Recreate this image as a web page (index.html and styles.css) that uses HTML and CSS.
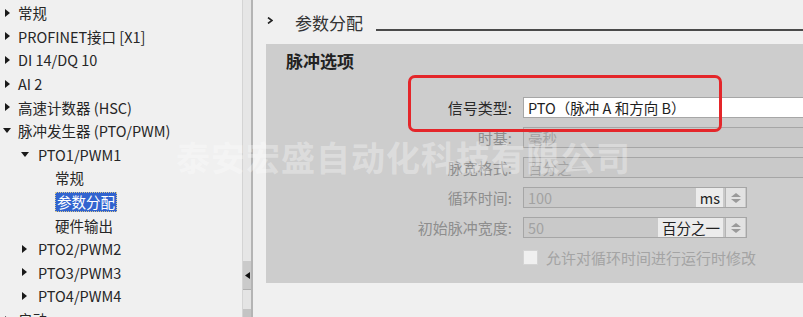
FILE: index.html
```html
<html>
<head>
    <title>
        属性 - 参数分配
    </title>
    <link rel="stylesheet" href="styles.css">
</head>

<body>
<div class="window">
    <ul class="tree">
        <li class="node lvl0"><i class="twisty closed"></i>常规</li>
        <li class="node lvl0"><i class="twisty closed"></i>PROFINET接口 [X1]</li>
        <li class="node lvl0"><i class="twisty closed"></i>DI 14/DQ 10</li>
        <li class="node lvl0"><i class="twisty closed"></i>AI 2</li>
        <li class="node lvl0"><i class="twisty closed"></i>高速计数器 (HSC)</li>
        <li class="node lvl0"><i class="twisty open"></i>脉冲发生器 (PTO/PWM)</li>
        <li class="node lvl1"><i class="twisty open"></i>PTO1/PWM1</li>
        <li class="node lvl2">常规</li>
        <li class="node lvl2"><span class="selected">参数分配</span></li>
        <li class="node lvl2">硬件输出</li>
        <li class="node lvl1"><i class="twisty closed"></i>PTO2/PWM2</li>
        <li class="node lvl1"><i class="twisty closed"></i>PTO3/PWM3</li>
        <li class="node lvl1"><i class="twisty closed"></i>PTO4/PWM4</li>
        <li class="node lvl0"><i class="twisty closed"></i>启动</li>
    </ul>

    <div class="splitter">
        <div class="split-track"></div>
        <div class="split-btn">
            <svg width="5" height="7" viewBox="0 0 5 7"><path d="M5 0 L0 3.5 L5 7 Z" fill="#111"/></svg>
        </div>
        <div class="split-gap"></div>
        <div class="split-end"></div>
    </div>

    <div class="content">
        <div class="section-head">
            <svg class="chevron" width="6" height="7" viewBox="0 0 6 7"><path d="M1 0.5 L5 3.5 L1 6.5" fill="none" stroke="#222" stroke-width="1.6"/></svg>
            <span class="section-title">参数分配</span>
            <div class="rule"></div>
        </div>

        <div class="group">
            <h3>脉冲选项</h3>
            <div class="form">
                <label class="label active">信号类型:</label>
                <div class="field white">PTO（脉冲 A 和方向 B）</div>

                <label class="label">时基:</label>
                <div class="field">毫秒</div>

                <label class="label">脉宽格式:</label>
                <div class="field">百分之一</div>

                <label class="label">循环时间:</label>
                <div class="field short">
                    <span class="value">100</span>
                    <span class="unit">ms</span>
                    <span class="spin"><i class="up"></i><i class="down"></i></span>
                </div>

                <label class="label">初始脉冲宽度:</label>
                <div class="field short">
                    <span class="value">50</span>
                    <span class="unit">百分之一</span>
                    <span class="spin"><i class="up"></i><i class="down"></i></span>
                </div>

                <span></span>
                <div class="check-row">
                    <span class="checkbox"></span>
                    <span>允许对循环时间进行运行时修改</span>
                </div>
            </div>
        </div>
    </div>

    <!-- watermark and annotation lie over the page -->
    <div class="watermark">泰安宏盛自动化科技有限公司</div>
    <div class="highlight"></div>
</div>
</body>
</html>
```

FILE: styles.css
```css
body {
    margin: 0;
    overflow: hidden;
    font-family: "Noto Sans CJK SC", sans-serif;
    background-color: #f0f0f0;
}

.window {
    position: relative;
    display: flex;
    width: 803px;
    height: 317px;
    overflow: hidden;
}

/* left navigation tree */
.tree {
    list-style: none;
    margin: 0;
    padding: 1px 0 0 0;
    width: 242px;
    flex-shrink: 0;
    background-color: #f0f0f0;
    font-size: 14.5px;
    color: #262626;
}

.node {
    display: flex;
    align-items: center;
    height: 23.6px;
    white-space: nowrap;
}

.lvl0 {
    padding-left: 5px;
}

.lvl1 {
    padding-left: 22px;
}

.lvl2 {
    padding-left: 55px;
}

.twisty {
    width: 0;
    height: 0;
}

.twisty.closed {
    border-left: 5px solid #1a1a1a;
    border-top: 4px solid transparent;
    border-bottom: 4px solid transparent;
    margin-right: 8px;
}

.twisty.open {
    border-top: 5px solid #1a1a1a;
    border-left: 4px solid transparent;
    border-right: 4px solid transparent;
    margin-left: -2px;
    margin-right: 7px;
}

.lvl1 .twisty.closed {
    margin-right: 11px;
}

.lvl1 .twisty.open {
    margin-left: -1px;
    margin-right: 9px;
}

.selected {
    padding: 0 2px;
    line-height: 20px;
    background-color: #3163cf;
    color: white;
    outline: 1px dotted #d8c890;
    outline-offset: -1px;
}

/* splitter between panes */
.splitter {
    display: flex;
    flex-direction: column;
    width: 8px;
    flex-shrink: 0;
    border-left: 1px solid #d4d4d4;
    border-right: 2px solid #b4b4b4;
    background-color: #e6e6e6;
}

.split-track {
    flex: 1;
}

.split-btn {
    display: flex;
    align-items: center;
    justify-content: center;
    height: 28px;
    background-color: #cacaca;
    border-bottom: 1px solid #b0b0b0;
}

.split-gap {
    height: 19px;
    background-color: #e4e4e4;
}

.split-end {
    height: 8px;
    background-color: #c4c4c4;
}

/* right content pane */
.content {
    flex: 1;
    min-width: 0;
    background-color: #f0f0f0;
}

.section-head {
    display: flex;
    align-items: center;
    height: 44px;
    padding-left: 14px;
}

.chevron {
    margin-top: -3px;
}

.section-title {
    margin-left: 22px;
    font-size: 17px;
    color: #333;
}

.rule {
    flex: 1;
    height: 2px;
    margin-left: 13px;
    margin-top: 16px;
    background-color: #4a4a4a;
}

.group {
    height: 239px;
    margin-left: 13px;
    background-color: #cdcdcd;
}

.group h3 {
    margin: 0;
    padding: 6px 0 0 20px;
    line-height: 22px;
    font-size: 17px;
    font-weight: bold;
    color: #222;
}

.form {
    display: grid;
    grid-template-columns: 246px 1fr;
    column-gap: 11px;
    row-gap: 9px;
    grid-auto-rows: 21px;
    margin-top: 25px;
}

.label {
    text-align: right;
    font-size: 15px;
    line-height: 21px;
    color: #8e8e8e;
}

.label.active {
    color: #2a2a2a;
}

.field {
    display: flex;
    align-items: center;
    margin-right: -10px;
    padding-left: 4px;
    border: 1px solid #a6a6a6;
    background-color: #c9c9c9;
    font-size: 14.5px;
    color: #a2a2a2;
    white-space: nowrap;
}

.field.white {
    background-color: white;
    color: #1e1e1e;
}

.field.short {
    width: 217px;
    margin-right: 0;
    padding-right: 1px;
}

.value {
    flex: 1;
}

.unit {
    align-self: stretch;
    display: flex;
    align-items: center;
    padding: 0 3px 0 4px;
    background-color: #ececec;
    color: #222;
}

.spin {
    display: flex;
    flex-direction: column;
    align-items: center;
    justify-content: center;
    gap: 2px;
    align-self: stretch;
    width: 19px;
    margin-left: 2px;
    border-left: 1px solid #b4b4b4;
    background-color: #e2e2e2;
}

.spin .up {
    border-bottom: 4px solid #9a9a9a;
    border-left: 5px solid transparent;
    border-right: 5px solid transparent;
}

.spin .down {
    border-top: 4px solid #9a9a9a;
    border-left: 5px solid transparent;
    border-right: 5px solid transparent;
}

.check-row {
    display: flex;
    align-items: center;
    gap: 8px;
    font-size: 15px;
    color: #a4a4a4;
}

.checkbox {
    width: 13px;
    height: 13px;
    border: 1px solid #d4d4d4;
    background-color: #f0f0f0;
}

/* overlays */
.watermark {
    position: absolute;
    left: 176px;
    top: 136px;
    font-size: 34px;
    line-height: 42px;
    font-weight: bold;
    letter-spacing: 1px;
    color: rgba(255, 255, 255, 0.32);
    white-space: nowrap;
    pointer-events: none;
}

.highlight {
    position: absolute;
    left: 408px;
    top: 75px;
    width: 308px;
    height: 51px;
    border: 3px solid #e4262a;
    border-radius: 7px;
}
```
